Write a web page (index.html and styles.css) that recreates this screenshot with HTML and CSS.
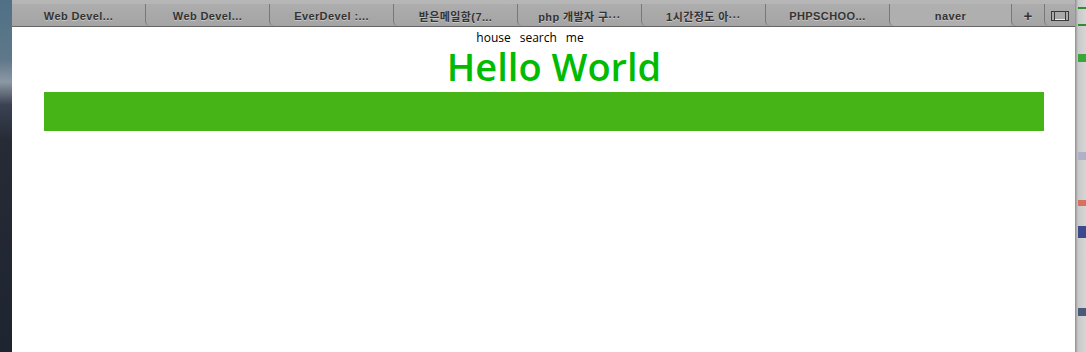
FILE: index.html
```html
<!DOCTYPE html>
<html lang="ko">
<head>
<meta charset="utf-8">
<title>Hello World</title>
<link rel="stylesheet" href="styles.css">
</head>
<body>
<div class="screen">
  <div class="desk-left"></div>
  <div class="browser">
    <div class="tabbar">
      <div class="tab first">Web Devel...</div>
      <div class="tab">Web Devel...</div>
      <div class="tab">EverDevel :...</div>
      <div class="tab">받은메일함(7...</div>
      <div class="tab">php 개발자 구···</div>
      <div class="tab">1시간정도 아···</div>
      <div class="tab">PHPSCHOO...</div>
      <div class="tab active">naver</div>
      <div class="tab btn plus">+</div>
      <div class="tab btn list">
        <svg width="18" height="10" viewBox="0 0 18 10"><rect x="0.5" y="0.5" width="17" height="9" fill="none" stroke="#3a3a3a"/><line x1="3.5" y1="1" x2="3.5" y2="9" stroke="#3a3a3a"/><line x1="14.5" y1="1" x2="14.5" y2="9" stroke="#3a3a3a"/><line x1="4" y1="8.5" x2="14" y2="8.5" stroke="#eee"/></svg>
      </div>
    </div>
    <div class="page">
      <ul class="nav">
        <li>house</li>
        <li>search</li>
        <li>me</li>
      </ul>
      <h1 class="title">Hello World</h1>
      <div class="bar"></div>
    </div>
  </div>
  <div class="desk-right">
    <div class="r-line g1"></div>
    <div class="r-line g2"></div>
    <div class="r-block b1"></div>
    <div class="r-block b2"></div>
    <div class="r-block b3"></div>
    <div class="r-block b4"></div>
    <div class="r-block b5"></div>
  </div>
</div>
</body>
</html>
```
FILE: styles.css
```css
html, body {
  margin: 0;
  padding: 0;
  background: #fff;
}
.screen {
  display: flex;
  width: 1086px;
  height: 352px;
  overflow: hidden;
}
.desk-left {
  width: 12px;
  flex: none;
  background: linear-gradient(#4f7086 0, #5f788a 60px, #8c98a4 82px, #3a4252 105px, #262b36 140px, #1e2430 100%);
}
.browser {
  width: 1063px;
  flex: none;
  display: flex;
  flex-direction: column;
}
.tabbar {
  flex: none;
  display: flex;
  background: linear-gradient(#adadad, #a4a4a4);
  border-top: 4px solid #b6b6b6;
  border-bottom: 1px solid #666;
  box-sizing: border-box;
  height: 27px;
  font-family: "Liberation Sans", "Noto Sans CJK KR", sans-serif;
  font-size: 11px;
  font-weight: bold;
  color: #333;
}
.tab {
  width: 124px;
  flex: none;
  display: flex;
  align-items: center;
  justify-content: center;
  border-left: 1px solid #787878;
  border-bottom-left-radius: 5px;
  box-sizing: border-box;
  text-shadow: 0 1px 0 #c8c8c8;
  white-space: nowrap;
  letter-spacing: 0.4px;
  padding-top: 1px;
}
.tab.first {
  width: 133px;
  border-left: none;
}
.tab.active {
  width: 122px;
  background: #afafaf;
}
.tab.btn {
  font-size: 15px;
}
.tab.plus {
  width: 33px;
}
.tab.list {
  width: 32px;
  border-right: 1px solid #8a8a8a;
}
.page {
  flex: 1;
  background: #fff;
  padding: 0 31px 0 32px;
}
.nav {
  list-style: none;
  margin: 3px 0 0;
  padding: 0 28px 0 0;
  display: flex;
  justify-content: center;
  gap: 9px;
  font-family: "Open Sans", sans-serif;
  font-size: 12px;
  line-height: 15px;
  color: #000;
}
.title {
  margin: 1px 0 5px;
  padding-left: 20px;
  text-align: center;
  font-family: "Open Sans", sans-serif;
  font-weight: 600;
  font-size: 38px;
  line-height: 41px;
  color: #00bb00;
}
.bar {
  height: 39px;
  background: #46b316;
}
.desk-right {
  width: 11px;
  flex: none;
  background: linear-gradient(90deg, #8d8d8d 0, #c9c9c9 3px, #d6d6d6 100%);
  display: flex;
  flex-direction: column;
}
.r-line {
  height: 2px;
  background: #2e8f2e;
  margin-left: 3px;
}
.g1 { margin-top: 7px; }
.g2 { margin-top: 15px; }
.r-block {
  margin-left: 3px;
  height: 8px;
}
.b1 { margin-top: 28px; background: #3aa63a; }
.b2 { margin-top: 90px; background: #b0b0c8; }
.b3 { margin-top: 40px; background: #d87060; height: 6px; }
.b4 { margin-top: 20px; background: #3a4a8a; height: 12px; }
.b5 { margin-top: 70px; background: #4a5a7a; height: 8px; }
```
